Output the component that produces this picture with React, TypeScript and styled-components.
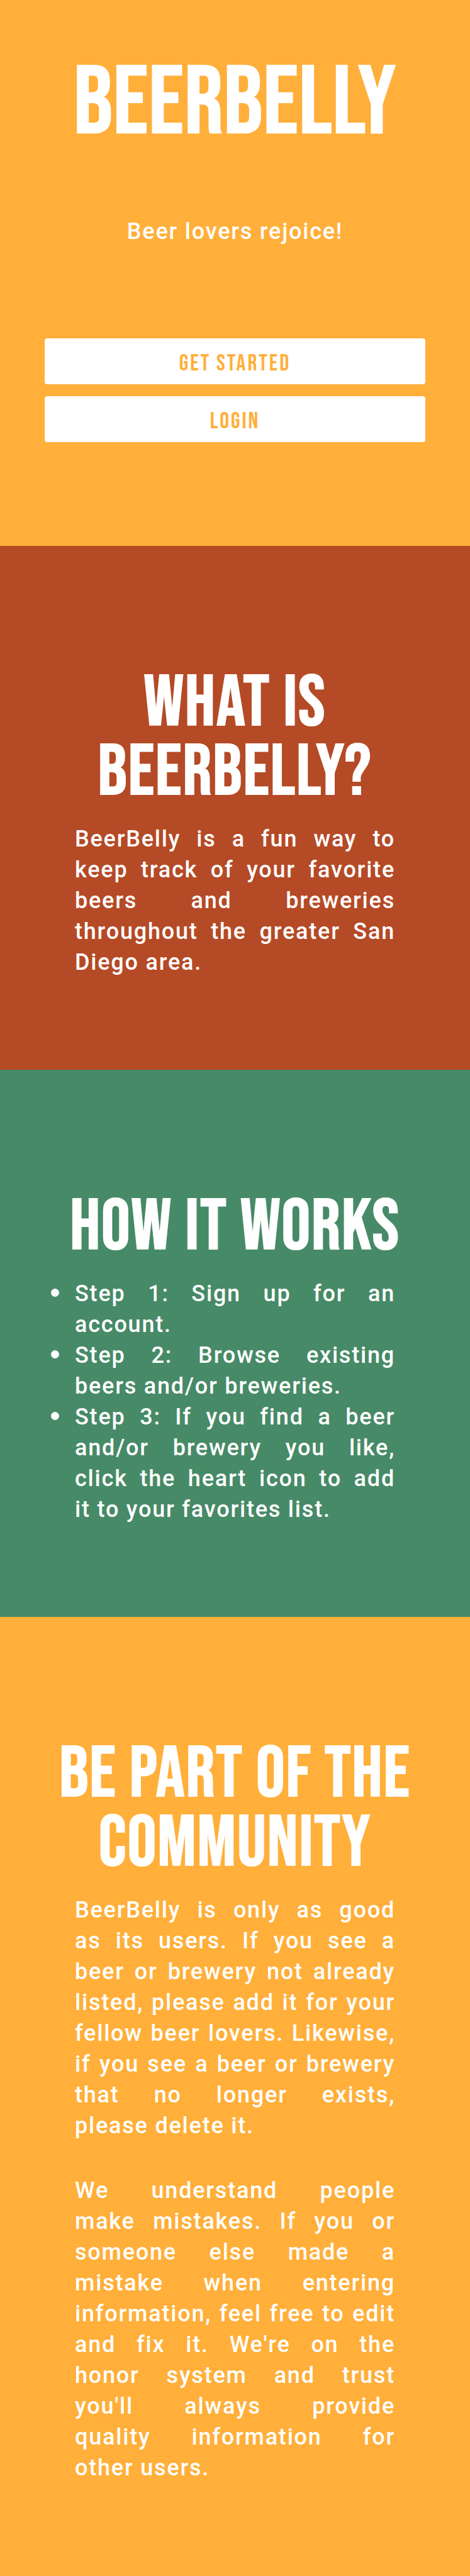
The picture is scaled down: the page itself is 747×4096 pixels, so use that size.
import React from "react";
import styled, { createGlobalStyle } from "styled-components";

const amber = "#ffaf3a";
const rust = "#b54a26";
const green = "#478a67";

const GlobalStyle = createGlobalStyle`
  * { box-sizing: border-box; }
  body { margin: 0; background: ${amber}; color: #fff; font: 500 36px/49px Roboto, sans-serif; letter-spacing: 0.05em; }
  h1, h2, p, ul { margin: 0; padding: 0; }
`;

const display = `"Bebas Neue", "Liberation Sans Narrow", "Roboto Condensed", Roboto, sans-serif`;

const Hero = styled.header`
  background: ${amber};
  text-align: center;
  padding: 99px 71px 165px;
`;

const Title = styled.h1`
  font: 400 153px/132px ${display};
  letter-spacing: 1px;
  -webkit-text-stroke: 2px currentColor;
  white-space: nowrap;
`;

const Tagline = styled.p`
  margin: 113px 0 145px;
`;

const Actions = styled.nav`
  display: flex;
  flex-direction: column;
  gap: 19px;
`;

const ActionButton = styled.button`
  width: 100%;
  height: 73px;
  padding: 8px 0 0;
  border: 0;
  border-radius: 4px;
  background: #fff;
  color: ${amber};
  font: 400 37px/37px ${display};
  letter-spacing: 3px;
  cursor: pointer;
`;

const Panel = styled.section<{ $color: string }>`
  background: ${(p) => p.$color};
  padding: 196px 71px 146px;
`;

const Heading = styled.h2`
  font: 400 114px/110px ${display};
  letter-spacing: 2px;
  -webkit-text-stroke: 2px currentColor;
  text-align: center;
  margin-bottom: 26px;
`;

const Copy = styled.div`
  display: grid;
  gap: 54px;
  padding: 0 48px;
  text-align: justify;
`;

const Steps = styled.ul`
  padding: 0 48px 0 10px;
  list-style: none;
  text-align: justify;
`;

const Step = styled.li`
  display: flex;
  gap: 25px;

  &::before {
    content: "";
    flex: none;
    width: 13px;
    height: 13px;
    margin-top: 16px;
    border-radius: 50%;
    background: currentColor;
  }
`;

export default function App() {
  return (
    <>
      <GlobalStyle />
      <Hero>
        <Title>BEERBELLY</Title>
        <Tagline>Beer lovers rejoice!</Tagline>
        <Actions>
          <ActionButton type="button">GET STARTED</ActionButton>
          <ActionButton type="button">LOGIN</ActionButton>
        </Actions>
      </Hero>
      <main>
        <Panel $color={rust}>
          <Heading>WHAT IS BEERBELLY?</Heading>
          <Copy>
            <p>
              BeerBelly is a fun way to keep track of your favorite beers and
              breweries throughout the greater San Diego area.
            </p>
          </Copy>
        </Panel>
        <Panel $color={green}>
          <Heading>HOW IT WORKS</Heading>
          <Steps>
            <Step>Step 1: Sign up for an account.</Step>
            <Step>Step 2: Browse existing beers and/or breweries.</Step>
            <Step>
              Step 3: If you find a beer and/or brewery you like, click the
              heart icon to add it&nbsp;to your favorites list.
            </Step>
          </Steps>
        </Panel>
        <Panel $color={amber}>
          <Heading>BE PART OF THE COMMUNITY</Heading>
          <Copy>
            <p>
              BeerBelly is only as good as&nbsp;its users. If you see a
              beer&nbsp;or brewery not already listed, please add it for your
              fellow beer lovers. Likewise, if you see a beer or brewery that no
              longer exists, please&nbsp;delete it.
            </p>
            <p>
              We understand people make&nbsp;mistakes. If you or someone else
              made a mistake when entering information, feel free to edit and
              fix it. We're on the honor system and trust you'll always provide
              quality&nbsp;information for other&nbsp;users.
            </p>
          </Copy>
        </Panel>
      </main>
    </>
  );
}
